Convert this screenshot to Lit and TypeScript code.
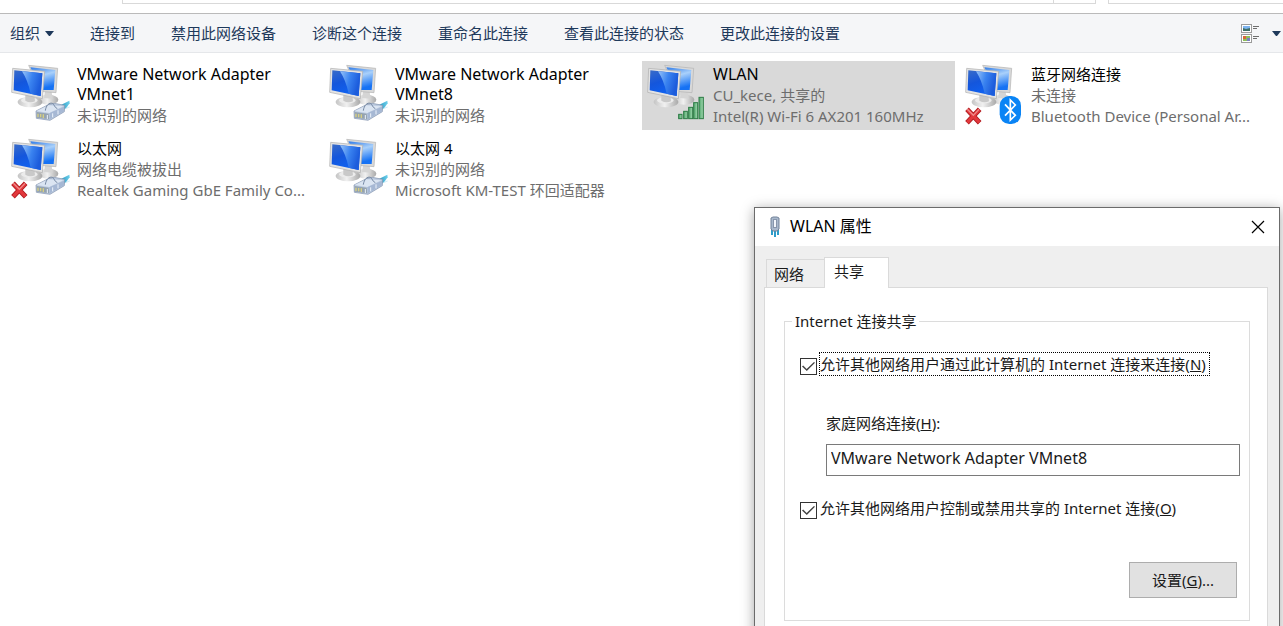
import { LitElement, html, svg, css, nothing } from "lit";
import { customElement, property, state } from "lit/decorators.js";
import { classMap } from "lit/directives/class-map.js";

type Medium = "cable" | "wifi" | "bluetooth";

interface Connection {
  name: string;
  status: string;
  device?: string;
  medium: Medium;
  offline?: boolean;
}

const CONNECTIONS: Connection[] = [
  { name: "VMware Network Adapter VMnet1", status: "未识别的网络", medium: "cable" },
  { name: "VMware Network Adapter VMnet8", status: "未识别的网络", medium: "cable" },
  { name: "WLAN", status: "CU_kece, 共享的", device: "Intel(R) Wi-Fi 6 AX201 160MHz", medium: "wifi" },
  { name: "蓝牙网络连接", status: "未连接", device: "Bluetooth Device (Personal Ar...", medium: "bluetooth", offline: true },
  { name: "以太网", status: "网络电缆被拔出", device: "Realtek Gaming GbE Family Co...", medium: "cable", offline: true },
  { name: "以太网 4", status: "未识别的网络", device: "Microsoft KM-TEST 环回适配器", medium: "cable" },
];

const COMMANDS = ["连接到", "禁用此网络设备", "诊断这个连接", "重命名此连接", "查看此连接的状态", "更改此连接的设置"];

const plug = svg`
  <path d="M184 146 L208 134 L209 142 L197 158 L184 162Z" fill="url(#wire)" />
  <path d="M190 160 L209 153" stroke="#b9e3f2" stroke-width="2" />
  <path d="M108 165 L145 146 L163 142 L194 148 L193 167 L150 193 L109 187Z" fill="#bccbe0" stroke="#7f90aa" stroke-width="2" stroke-linejoin="round" />
  <path d="M110 165 L145 148 L190 151 L148 171Z" fill="#dbe5f2" />
  <path d="M148 172 L192 152 L192 166 L150 190Z" fill="#a6b8d4" />
  <path d="M110 168 L146 173 L148 190 L110 185Z" fill="#95a3b0" />
  <path d="M114 173V183 M122 174V184 M130 175V186" stroke="#d6cf83" stroke-width="4" />
  <path d="M136 164 C138 148 148 139 157 142 C164 145 162 154 172 158" fill="none" stroke="#7588a3" stroke-width="3" />
  <path d="M142 177V189 M158 172V184 M174 163V175" stroke="#edf3fb" stroke-width="3" />`;

const bars = svg`
  <g fill="url(#bar)" stroke="#2c7b45" stroke-width="3">
    <rect x="128" y="175" width="10" height="13" />
    <rect x="143" y="166" width="11" height="22" />
    <rect x="158" y="154" width="12" height="34" />
    <rect x="173" y="140" width="12" height="48" />
    <rect x="189" y="124" width="13" height="64" />
  </g>`;

const bluetooth = svg`
  <rect x="137" y="120" width="64" height="84" rx="29" fill="#0a84f5" />
  <path d="M153 145 L184 178 L169 192 V132 L184 147 L153 179" fill="none" stroke="#fff" stroke-width="5" />`;

const overlays = { cable: plug, wifi: bars, bluetooth };

const isLatin = (text: string) => /^[\x20-\x7e]+$/.test(text);

@customElement("connection-item")
export class ConnectionItem extends LitElement {
  @property({ attribute: false }) item!: Connection;

  static styles = css`
    :host { display: flex; gap: 7px; padding: 3px 4px; min-width: 0; cursor: default; }
    .icon { width: 60px; height: 62px; flex: none; }
    .text { min-width: 0; flex: 1; display: flex; flex-direction: column; line-height: 21px; color: #6d6d6d; }
    .name { padding-bottom: 1px; color: #000; line-height: 20px; overflow-wrap: break-word; }
    .latin { font-size: 16px; }
    .line { white-space: nowrap; overflow: hidden; text-overflow: ellipsis; }
  `;

  render() {
    const { name, status, device, medium, offline } = this.item;
    return html`
      <svg class="icon" viewBox="30 24 180 186" aria-hidden="true">
        <defs>
          <linearGradient id="front" x1="0" y1="0" x2=".4" y2="1">
            <stop offset="0" stop-color="#3a6cc8" /><stop offset=".5" stop-color="#1456dc" /><stop offset="1" stop-color="#0f62f2" />
          </linearGradient>
          <linearGradient id="gloss" x1="0" y1=".2" x2=".9" y2=".5">
            <stop offset="0" stop-color="#8cbcf8" /><stop offset=".5" stop-color="#3a83f0" /><stop offset="1" stop-color="#1c5cdc" />
          </linearGradient>
          <linearGradient id="back" x1="0" y1="0" x2=".3" y2="1">
            <stop offset="0" stop-color="#2f7be8" /><stop offset=".45" stop-color="#a9d0fa" /><stop offset="1" stop-color="#1672f4" />
          </linearGradient>
          <linearGradient id="foot" x1="0" x2="1">
            <stop offset="0" stop-color="#c4c4c4" /><stop offset=".45" stop-color="#f1f1f1" /><stop offset="1" stop-color="#a9a9a9" />
          </linearGradient>
          <linearGradient id="bar" x1="0" x2="1">
            <stop offset="0" stop-color="#4fa56b" /><stop offset="1" stop-color="#a5dbb3" />
          </linearGradient>
          <linearGradient id="wire" x1="0" x2="1">
            <stop offset="0" stop-color="#2b9cc4" /><stop offset="1" stop-color="#6fd0ec" />
          </linearGradient>
        </defs>
        <ellipse cx="145" cy="131" rx="30" ry="15" fill="url(#foot)" />
        <path d="M135 105 L155 108 L158 128 L132 126Z" fill="#d5d5d5" />
        <path d="M86 28 L173 37 L168 110 L120 106Z" fill="#d9d9d9" stroke="#b2b2b2" stroke-width="2" stroke-linejoin="round" />
        <path d="M91 34 L166 42 L161 102 L122 102Z" fill="url(#back)" />
        <ellipse cx="90" cy="138" rx="37" ry="16" fill="url(#foot)" />
        <ellipse cx="88" cy="133" rx="25" ry="9" fill="#ececec" />
        <path d="M76 112 L103 118 L105 136 Q90 142 76 134Z" fill="#c9c9c9" />
        <path d="M38 37 L134 46 L127 128 L35 109Z" fill="#e3e3e3" stroke="#adadad" stroke-width="2" stroke-linejoin="round" />
        <path d="M43 43 L127 52 L122 120 L41 103Z" fill="url(#front)" />
        <path d="M66 46 L127 52 L122 120 L92 113 Q84 74 66 46Z" fill="url(#gloss)" />
        ${overlays[medium]}
        ${offline
          ? svg`<path d="M39 160 L77 200 M77 160 L39 200" stroke="#b01c20" stroke-width="15" />
                <path d="M40 161 L76 199 M76 161 L40 199" stroke="#e2383c" stroke-width="10" />
                <path d="M40 160 L58 178 L75 160" fill="none" stroke="#f08a8a" stroke-width="4" />`
          : nothing}
      </svg>
      <div class="text">
        <span class=${classMap({ name: true, latin: isLatin(name) })}>${name}</span>
        <span class="line">${status}</span>
        ${device ? html`<span class="line">${device}</span>` : nothing}
      </div>`;
  }
}

@customElement("sharing-dialog")
export class SharingDialog extends LitElement {
  @state() private tab = "共享";

  static styles = css`
    :host { display: block; box-sizing: border-box; border: 1px solid #6b6b6b; background: #efefef; box-shadow: 0 2px 12px rgba(0, 0, 0, 0.36); }
    button, input { font: inherit; color: inherit; }
    .title { display: flex; align-items: center; gap: 8px; height: 38px; padding: 0 14px 0 13px; background: #fff; color: #000; }
    .title h1 { flex: 1; margin: 0; padding-bottom: 2px; font-size: 16px; font-weight: 400; }
    .title svg { flex: none; }
    .close { display: flex; padding: 0; border: 0; background: none; }
    .body { padding: 11px 11px 0 9px; color: #1a1a1a; }
    .tabs { display: flex; align-items: flex-end; padding-left: 2px; }
    .tab { height: 28px; width: 59px; padding: 0 0 0 7px; text-align: left; background: #efefef; border: 1px solid #dadada; border-bottom: 0; }
    .tab.active { height: 31px; width: 65px; margin: 0 0 -1px -1px; padding: 0 0 4px 9px; background: #fff; z-index: 1; }
    .panel { border: 1px solid #dadada; background: #fff; padding: 23px 17px 40px 19px; }
    fieldset { display: flex; flex-direction: column; min-width: 0; margin: 0; padding: 21px 9px 22px 15px; border: 1px solid #dcdcdc; }
    legend { margin-left: -8px; padding: 0 3px; line-height: 20px; }
    .check { display: flex; align-items: center; gap: 2px; }
    .check label { padding-right: 3px; line-height: 22px; border: 1px solid transparent; }
    .check label.focus { border: 1px dotted #000; }
    .check input { appearance: none; display: grid; place-items: center; flex: none; width: 17px; height: 17px; margin: 5px 0 0; border: 1px solid #333; background: #fff; }
    .check input:checked::before { content: ""; width: 13px; height: 11px; background: #444; clip-path: polygon(0 50%, 9% 42%, 36% 72%, 92% 8%, 100% 16%, 37% 90%); }
    .field { display: flex; flex-direction: column; gap: 10px; padding: 36px 0 20px 26px; line-height: 22px; }
    .field input { box-sizing: border-box; width: 100%; height: 32px; padding: 0 4px 4px; border: 1px solid #7a7a7a; border-radius: 0; background: #fff; font-size: 16px; }
    .settings { align-self: flex-end; width: 108px; height: 36px; margin: 42px 3px 0 0; padding: 0; border: 1px solid #adadad; background: #e1e1e1; }
  `;

  render() {
    return html`
      <header class="title">
        <svg width="14" height="22" viewBox="0 0 14 22" aria-hidden="true">
          <path d="M4 13 V19 M7 13 V21 M10 13 V19" stroke="#2f9cc9" stroke-width="2" />
          <path d="M3 2 L5 1 H9 L11 2 V13 L9 15 H5 L3 13Z" fill="#a9b8cc" stroke="#73839a" />
          <rect x="5.500" y="3.500" width="3" height="8" fill="#f2f6fb" stroke="#8795ab" />
        </svg>
        <h1>WLAN 属性</h1>
        <button class="close" aria-label="关闭">
          <svg width="14" height="14" viewBox="0 0 14 14" aria-hidden="true">
            <path d="M1 1 L13 13 M13 1 L1 13" stroke="#000" stroke-width="1.200" />
          </svg>
        </button>
      </header>
      <div class="body">
        <div class="tabs" role="tablist">
          ${["网络", "共享"].map((name) => html`
            <button role="tab" aria-selected=${name === this.tab}
              class=${classMap({ tab: true, active: name === this.tab })}
              @click=${() => (this.tab = name)}>${name}</button>`)}
        </div>
        <div class="panel">
          <fieldset>
            <legend>Internet 连接共享</legend>
            <div class="check">
              <input type="checkbox" id="allow" checked />
              <label class="focus" for="allow">允许其他网络用户通过此计算机的 Internet 连接来连接(<u>N</u>)</label>
            </div>
            <div class="field">
              <label for="home">家庭网络连接(<u>H</u>):</label>
              <input id="home" type="text" value="VMware Network Adapter VMnet8" />
            </div>
            <div class="check">
              <input type="checkbox" id="control" checked />
              <label for="control">允许其他网络用户控制或禁用共享的 Internet 连接(<u>O</u>)</label>
            </div>
            <button class="settings">设置(<u>G</u>)...</button>
          </fieldset>
        </div>
      </div>`;
  }
}

@customElement("app-root")
export class AppRoot extends LitElement {
  @state() private selected = "WLAN";

  static styles = css`
    :host { display: block; position: relative; height: 100vh; overflow: hidden; background: #fff; font: 15px/20px "Noto Sans", "Noto Sans CJK SC", sans-serif; }
    .address { display: flex; gap: 12px; height: 4px; padding: 0 0 9px 122px; }
    .box { box-sizing: border-box; border: 1px solid #d9d9d9; border-top: 0; }
    .path { flex: 1; display: flex; justify-content: flex-end; }
    .refresh { width: 41px; border-left: 1px solid #d9d9d9; }
    .search { width: 175px; border-right: 0; }
    .toolbar { display: flex; align-items: center; gap: 36px; height: 38px; padding: 0 2px 0 10px; background: #f5f6f8; border-top: 1px solid #bababa; border-bottom: 1px solid #e5e7ea; }
    .toolbar button { display: flex; align-items: center; gap: 5px; padding: 0; border: 0; background: none; font: inherit; color: #1e395b; white-space: nowrap; }
    .toolbar .view { gap: 13px; margin-left: auto; }
    .list { display: grid; grid-template-columns: repeat(auto-fill, 313px); grid-auto-rows: 69px; gap: 5px; padding: 8px 6px; }
    connection-item { box-sizing: border-box; }
    .selected { background: #d9d9d9; }
    sharing-dialog { position: absolute; top: 207px; right: 3px; width: 526px; }
  `;

  render() {
    return html`
      <div class="address">
        <div class="box path"><span class="refresh"></span></div>
        <div class="box search"></div>
      </div>
      <nav class="toolbar">
        <button>组织
          <svg width="9" height="5" viewBox="0 0 9 5" aria-hidden="true"><path d="M0 0 H9 L5 5 H4Z" fill="#1e395b" /></svg>
        </button>
        ${COMMANDS.map((label) => html`<button>${label}</button>`)}
        <button class="view" aria-label="更改视图">
          <svg width="18" height="19" viewBox="0 0 18 19" aria-hidden="true">
            <g fill="#fff" stroke="#9b9b9b"><rect x=".5" y=".5" width="10" height="8" /><rect x=".5" y="10.500" width="10" height="8" /></g>
            <path d="M2 2 H9 V5 H2Z" fill="#7db4f0" /><path d="M2 4 L5 5 L9 4 V7 H2Z" fill="#3f6f67" />
            <path d="M2 12 H9 V17 H2Z" fill="#8dbf5a" /><path d="M2 12 H5 V15 H2Z" fill="#d9673a" /><path d="M6 14 H9 V17 H6Z" fill="#7c7fc4" />
            <path d="M12 2.500 H18 M12 4.500 H16 M12 12.500 H18 M12 14.500 H16" stroke="#6f6f6f" />
          </svg>
          <svg width="9" height="5" viewBox="0 0 9 5" aria-hidden="true"><path d="M0 0 H9 L5 5 H4Z" fill="#1e395b" /></svg>
        </button>
      </nav>
      <main class="list">
        ${CONNECTIONS.map((item) => html`
          <connection-item .item=${item}
            class=${classMap({ selected: item.name === this.selected })}
            @click=${() => (this.selected = item.name)}></connection-item>`)}
      </main>
      <sharing-dialog role="dialog" aria-label="WLAN 属性"></sharing-dialog>`;
  }
}
